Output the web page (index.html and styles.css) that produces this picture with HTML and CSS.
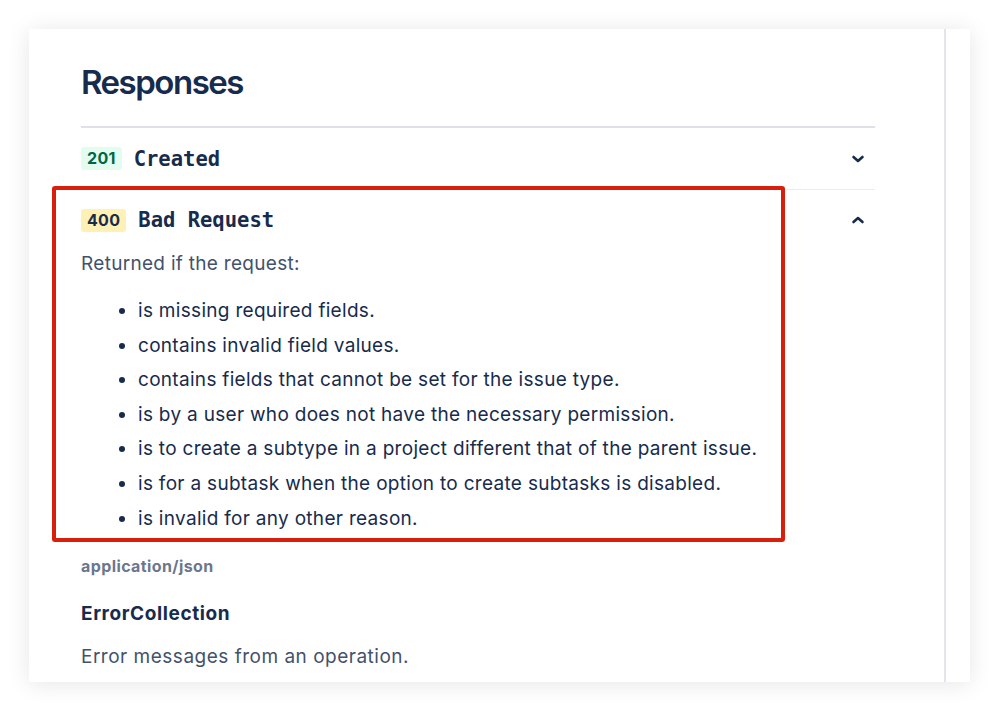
FILE: index.html
```html
<!DOCTYPE html>
<html>
<head>
<meta charset="utf-8">
<link rel="stylesheet" href="styles.css">
</head>
<body>
<div class="page">
  <div class="card">
    <div class="main">
      <h2 class="title">Responses</h2>
      <div class="responses">
        <div class="resp">
          <div class="resp-head">
            <span class="badge badge-ok">201</span>
            <span class="resp-name">Created</span>
            <svg class="chev" width="14" height="10" viewBox="0 0 14 10"><path d="M2.5 3 L7 7 L11.5 3" fill="none" stroke="#172B4D" stroke-width="2.6" stroke-linecap="round" stroke-linejoin="round"/></svg>
          </div>
        </div>
        <div class="resp resp-open">
          <div class="resp-head">
            <span class="badge badge-warn">400</span>
            <span class="resp-name">Bad Request</span>
            <svg class="chev" width="14" height="10" viewBox="0 0 14 10"><path d="M2.5 7 L7 3 L11.5 7" fill="none" stroke="#172B4D" stroke-width="2.6" stroke-linecap="round" stroke-linejoin="round"/></svg>
          </div>
          <div class="resp-body">
            <p class="lead">Returned if the request:</p>
            <ul class="reasons">
              <li>is missing required fields.</li>
              <li>contains invalid field values.</li>
              <li>contains fields that cannot be set for the issue type.</li>
              <li>is by a user who does not have the necessary permission.</li>
              <li>is to create a subtype in a project different that of the parent issue.</li>
              <li>is for a subtask when the option to create subtasks is disabled.</li>
              <li>is invalid for any other reason.</li>
            </ul>
          </div>
          <div class="highlight"></div>
          <div class="media">application/json</div>
          <div class="schema">ErrorCollection</div>
          <p class="schema-desc">Error messages from an operation.</p>
        </div>
      </div>
    </div>
    <div class="side"></div>
  </div>
</div>
</body>
</html>
```
FILE: styles.css
```css
html, body {
  margin: 0;
  padding: 0;
  background: #ffffff;
}
body {
  font-family: Inter, "Liberation Sans", sans-serif;
  color: #172B4D;
  width: 999px;
  height: 711px;
  overflow: hidden;
}
.page {
  padding: 29px;
}
.card {
  display: flex;
  width: 941px;
  height: 653px;
  background: #fff;
  box-shadow: 0 2px 22px rgba(0, 0, 0, 0.10);
  overflow: hidden;
}
.main {
  width: 863px;
  padding: 0 0 0 52px;
  border-right: 2px solid #e4e4ea;
}
.side {
  flex: 1;
}
.title {
  margin: 31px 0 0 0;
  font-size: 33px;
  line-height: 44px;
  font-weight: 600;
  letter-spacing: -1.5px;
  color: #172B4D;
}
.responses {
  width: 794px;
  margin-top: 22px;
  border-top: 2px solid #dfe1e6;
}
.resp {
  position: relative;
}
.resp + .resp {
  border-top: 1px solid #ebecf0;
}
.resp-head {
  display: flex;
  align-items: center;
  height: 61px;
}
.resp-open .resp-head {
  height: 60px;
}
.badge {
  display: inline-block;
  height: 23px;
  line-height: 23px;
  padding: 0 6px;
  border-radius: 3px;
  font-size: 16px;
  font-weight: 700;
  letter-spacing: 0.3px;
}
.badge-ok {
  background: #E3FCEF;
  color: #006644;
}
.badge-warn {
  background: #FFF0B3;
  color: #172B4D;
}
.resp-name {
  margin-left: 12px;
  font-family: "DejaVu Sans Mono", "Liberation Mono", monospace;
  font-size: 20.5px;
  font-weight: 700;
  color: #172B4D;
}
.chev {
  margin-left: auto;
  margin-right: 10px;
}
.lead {
  margin: 0;
  font-size: 19px;
  line-height: 28px;
  letter-spacing: 0.3px;
  color: #42526E;
}
.reasons {
  margin: 16px 0 0 0;
  padding-left: 57px;
  font-size: 19px;
  line-height: 34.6px;
  letter-spacing: 0.3px;
  color: #172B4D;
}
.highlight {
  position: absolute;
  left: -29px;
  top: -4px;
  width: 725px;
  height: 348px;
  border: 4px solid #DA1E0C;
  border-radius: 3px;
}
.media {
  margin-top: 20px;
  font-size: 16px;
  font-weight: 700;
  letter-spacing: 0.4px;
  color: #6B778C;
}
.schema {
  margin-top: 26px;
  font-size: 19px;
  font-weight: 700;
  letter-spacing: 0.6px;
  color: #172B4D;
}
.schema-desc {
  margin: 20px 0 0 0;
  font-size: 19px;
  letter-spacing: 0.5px;
  color: #42526E;
}
```
